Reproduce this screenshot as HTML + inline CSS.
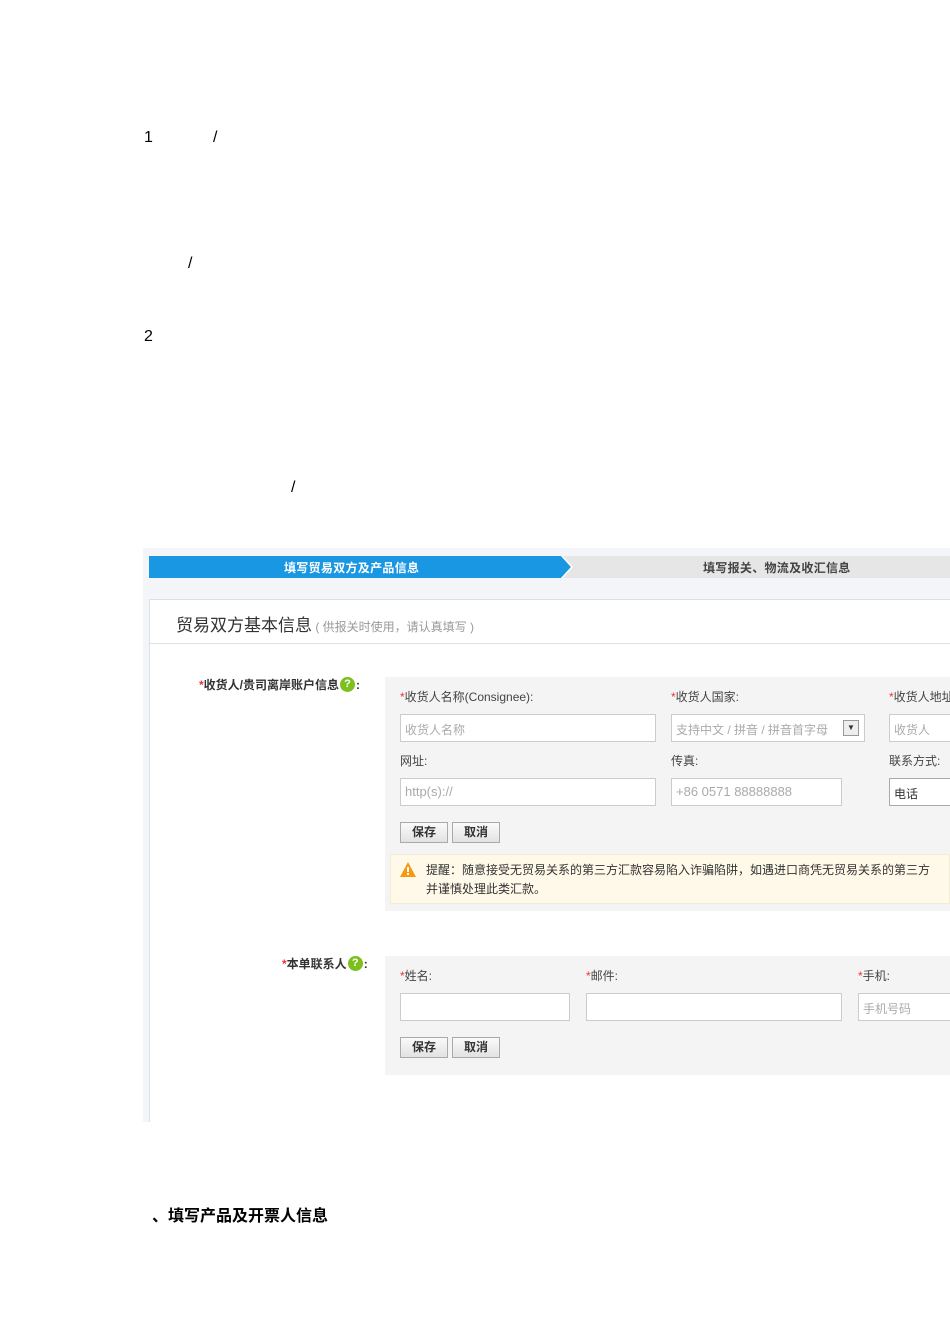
<!DOCTYPE html>
<html><head><meta charset="utf-8"><style>
*{margin:0;padding:0;box-sizing:border-box}
body{width:950px;height:1344px;background:#fff;position:relative;overflow:hidden;font-family:"Liberation Sans","Noto Sans CJK SC",sans-serif;}
.a{position:absolute;white-space:nowrap}
.t{font-size:16px;color:#000}
.s{font-size:12px;color:#444;line-height:16px}
.r{color:#e33}
.in{position:absolute;height:28px;background:#fff;border:1px solid #ccc;font-size:12px;color:#aaa;padding:6px 4px;white-space:nowrap;overflow:hidden}
.btn{position:absolute;width:48px;height:21px;background:linear-gradient(#fafafa,#e2e2e2);border:1px solid #aaa;font-size:12px;font-weight:bold;color:#333;text-align:center;line-height:19px}
.q{display:inline-block;width:15px;height:15px;border-radius:50%;background:#7cbf1e;color:#fff;font-size:11px;font-weight:bold;text-align:center;line-height:15px;vertical-align:top;margin:0 1px}
</style></head><body>
<div class="a t" style="left:144px;top:129px">1</div>
<div class="a t" style="left:213px;top:129px">/</div>
<div class="a t" style="left:188px;top:255px">/</div>
<div class="a t" style="left:144px;top:328px">2</div>
<div class="a t" style="left:291px;top:479px">/</div>

<div class="a" style="left:143px;top:548px;width:807px;height:574px;background:#f4f5f8"></div>
<div class="a" style="left:149px;top:556px;width:801px;height:22px;background:#e6e6e6"></div>
<svg class="a" style="left:149px;top:556px" width="424" height="22"><polygon points="0,0 412,0 422,11 412,22 0,22" fill="#1a97e3"/><polygon points="412,0 414,0 424,11 414,22 412,22 422,11" fill="#fff"/></svg>
<div class="a" style="left:284px;top:559px;font-size:12px;font-weight:bold;color:#fff;letter-spacing:0.3px">填写贸易双方及产品信息</div>
<div class="a" style="left:703px;top:559px;font-size:12px;font-weight:bold;color:#444;letter-spacing:0.3px">填写报关、物流及收汇信息</div>

<div class="a" style="left:149px;top:599px;width:801px;height:523px;background:#fff;border-left:1px solid #dde0e6;border-top:1px solid #dde0e6"></div>
<div class="a" style="left:149px;top:643px;width:801px;height:1px;background:#dde0e6"></div>
<div class="a" style="left:176px;top:611px;font-size:17px;color:#333">贸易双方基本信息<span style="font-size:12px;color:#999"> ( 供报关时使用，请认真填写 )</span></div>

<div class="a s" style="left:199px;top:677px;font-weight:bold;color:#333"><span class="r">*</span>收货人/贵司离岸账户信息<span class="q">?</span>:</div>
<div class="a" style="left:385px;top:677px;width:565px;height:234px;background:#f4f4f4"></div>
<div class="a s" style="left:400px;top:689px"><span class="r">*</span>收货人名称(Consignee):</div>
<div class="a s" style="left:671px;top:689px"><span class="r">*</span>收货人国家:</div>
<div class="a s" style="left:889px;top:689px"><span class="r">*</span>收货人地址</div>
<div class="in" style="left:400px;top:714px;width:256px">收货人名称</div>
<div class="in" style="left:671px;top:714px;width:194px">支持中文 / 拼音 / 拼音首字母</div>
<div class="a" style="left:843px;top:720px;width:16px;height:16px;border:1px solid #999;background:#eee;font-size:8px;text-align:center;line-height:14px;color:#333">▼</div>
<div class="in" style="left:889px;top:714px;width:70px">收货人</div>
<div class="a s" style="left:400px;top:753px">网址:</div>
<div class="a s" style="left:671px;top:753px">传真:</div>
<div class="a s" style="left:889px;top:753px">联系方式:</div>
<div class="in" style="left:400px;top:778px;width:256px;font-size:13px;padding-top:5px">http(s)://</div>
<div class="in" style="left:671px;top:778px;width:171px;font-size:13px;padding-top:5px">+86 0571 88888888</div>
<div class="in" style="left:889px;top:778px;width:70px;color:#333;border-color:#aaa">电话</div>
<div class="btn" style="left:400px;top:822px">保存</div>
<div class="btn" style="left:452px;top:822px">取消</div>
<div class="a" style="left:390px;top:854px;width:560px;height:50px;background:#fff9ea;border:1px solid #f5ecd5"></div>
<svg class="a" style="left:400px;top:862px" width="16" height="15"><polygon points="8,0 16,15 0,15" fill="#f59a10"/><rect x="7" y="5" width="2" height="5" fill="#fff"/><rect x="7" y="11" width="2" height="2" fill="#fff"/></svg>
<div class="a s" style="left:426px;top:862px;color:#333">提醒：随意接受无贸易关系的第三方汇款容易陷入诈骗陷阱，如遇进口商凭无贸易关系的第三方</div>
<div class="a s" style="left:426px;top:881px;color:#333">并谨慎处理此类汇款。</div>

<div class="a s" style="left:282px;top:956px;font-weight:bold;color:#333"><span class="r">*</span>本单联系人<span class="q">?</span>:</div>
<div class="a" style="left:385px;top:956px;width:565px;height:119px;background:#f4f4f4"></div>
<div class="a s" style="left:400px;top:968px"><span class="r">*</span>姓名:</div>
<div class="a s" style="left:586px;top:968px"><span class="r">*</span>邮件:</div>
<div class="a s" style="left:858px;top:968px"><span class="r">*</span>手机:</div>
<div class="in" style="left:400px;top:993px;width:170px"></div>
<div class="in" style="left:586px;top:993px;width:256px"></div>
<div class="in" style="left:858px;top:993px;width:100px">手机号码</div>
<div class="btn" style="left:400px;top:1037px">保存</div>
<div class="btn" style="left:452px;top:1037px">取消</div>

<div class="a" style="left:152px;top:1202px;font-size:16px;font-weight:bold;color:#000">、填写产品及开票人信息</div>
</body></html>
